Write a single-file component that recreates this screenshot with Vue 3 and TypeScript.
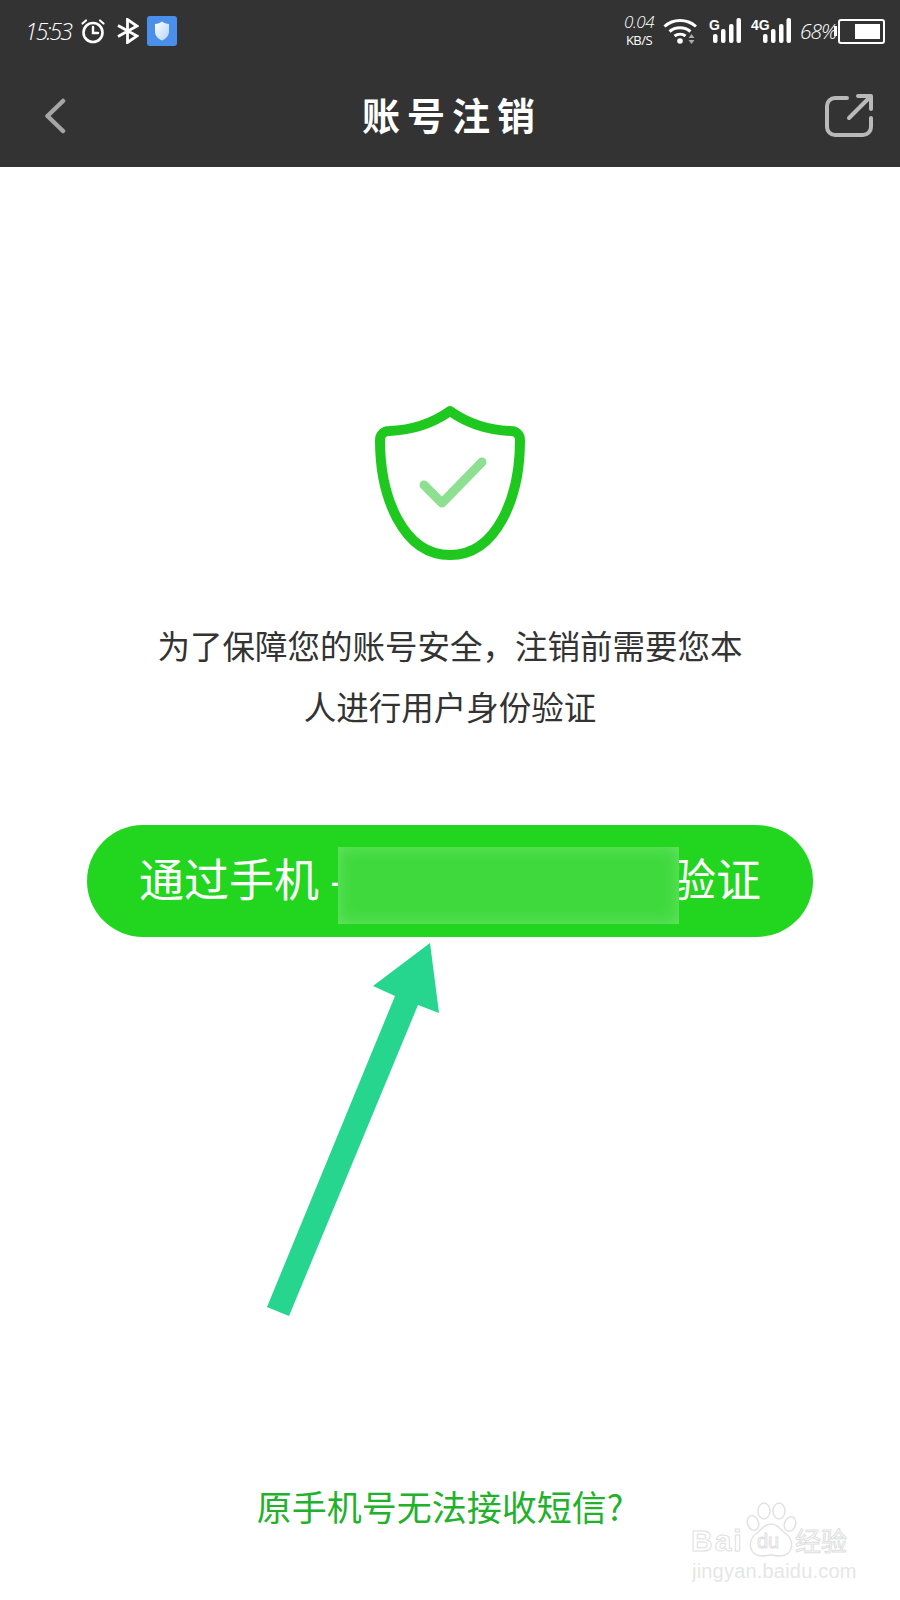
<template>
  <div class="page">
    <header class="topbar">
      <div class="status">
        <div class="status-left">
          <span class="time">15:53</span>
          <svg class="ic-clock" width="26" height="26" viewBox="0 0 26 26" fill="none" stroke="#fff" stroke-linecap="round">
            <circle cx="13" cy="14.5" r="9.5" stroke-width="2.6" />
            <path d="M13 9v6h5" stroke-width="2.4" />
            <path d="M2.5 5.5 6 2.5M23.5 5.5 20 2.5" stroke-width="2.2" />
          </svg>
          <svg class="ic-bt" width="22" height="26" viewBox="0 0 22 26" fill="none" stroke="#fff" stroke-width="2.8">
            <path d="M1 7.5 20 18 10.5 24.5V1.5L20 8 1 18.5" />
          </svg>
          <svg class="ic-app" width="30" height="30" viewBox="0 0 30 30">
            <defs>
              <linearGradient id="shieldFill" x1="0" y1="0" x2="1" y2="1">
                <stop offset="0" stop-color="#ffffff" />
                <stop offset="1" stop-color="#b5d2fa" />
              </linearGradient>
            </defs>
            <rect width="30" height="30" rx="3" fill="#4a90ea" />
            <path d="M15 5.5c2 1.6 4.4 2.3 7 2.5v7.5c0 4.200-3 7.300-7 9-4-1.700-7-4.800-7-9V8c2.600-.2 5-.9 7-2.500Z" fill="url(#shieldFill)" />
          </svg>
        </div>
        <div class="status-right">
          <div class="speed"><span>0.04</span><span class="speed-unit">KB/S</span></div>
          <svg class="ic-wifi" width="36" height="28" viewBox="0 0 36 28" fill="none" stroke="#fff" stroke-width="3">
            <path d="M1.500 9.500C10 1.500 24 1.500 33 9.500" />
            <path d="M6.500 14.500c6-5 15-5 21 0" />
            <path d="M11.500 19c3.500-2.500 8-2.500 11 0" />
            <circle cx="17" cy="24" r="2.800" fill="#fff" stroke="none" />
            <path d="m28.500 17 3 4h-6ZM25.500 23h6l-3 4Z" fill="#aaa" stroke="none" />
          </svg>
          <div class="signal sig-g">
            <span class="net">G</span>
            <svg width="28" height="26" viewBox="0 0 28 26" fill="#fff">
              <rect x="0" y="16" width="4.500" height="9" rx="2" />
              <rect x="8" y="11" width="4.500" height="14" rx="2" />
              <rect x="16" y="6" width="4.500" height="19" rx="2" />
              <rect x="23.500" y="0" width="4.500" height="25" rx="2" />
            </svg>
          </div>
          <div class="signal sig-4g">
            <span class="net">4G</span>
            <svg width="28" height="26" viewBox="0 0 28 26" fill="#fff">
              <rect x="0" y="16" width="4.500" height="9" rx="2" />
              <rect x="8" y="11" width="4.500" height="14" rx="2" />
              <rect x="16" y="6" width="4.500" height="19" rx="2" />
              <rect x="23.500" y="0" width="4.500" height="25" rx="2" />
            </svg>
          </div>
          <span class="percent">68%</span>
          <div class="battery"><div class="battery-fill" :style="{ width: batteryLevel + '%' }"></div></div>
        </div>
      </div>
      <nav class="navbar">
        <svg class="ic-back" width="22" height="36" viewBox="0 0 22 36" fill="none" stroke="#a6a6a6" stroke-width="4.500" stroke-linecap="round" stroke-linejoin="round">
          <path d="M19 3 3.500 18 19 33" />
        </svg>
        <h1 class="title">账号注销</h1>
        <svg class="ic-share" width="48" height="43" viewBox="0 0 48 43" fill="none" stroke="#b9b9b9" stroke-width="4" stroke-linecap="round" stroke-linejoin="round">
          <path d="M22 4H10a8 8 0 0 0-8 8v21a8 8 0 0 0 8 8h28a8 8 0 0 0 8-8V24" />
          <path d="M24 24 45 3M33 2h13v13" />
        </svg>
      </nav>
    </header>

    <main class="content">
      <svg class="shield" width="150" height="156" viewBox="0 0 150 156" fill="none" stroke-linecap="round" stroke-linejoin="round">
        <path d="M75 6C89 16 109 25 136 26 141 26 145 30 145 35 145 92 122 150 75 150 28 150 5 92 5 35 5 30 9 26 14 26 41 25 61 16 75 6Z" stroke="#1ec81e" stroke-width="10" />
        <path d="M49 80 67 98 107 57" stroke="#8ce090" stroke-width="9" />
      </svg>
      <p class="notice">为了保障您的账号安全，注销前需要您本<br />人进行用户身份验证</p>
      <button class="verify-btn">
        <span>通过手机</span><span class="dot">-</span><span class="btn-end">验证</span>
        <span class="blur-patch"></span>
      </button>
      <a class="help-link">原手机号无法接收短信?</a>
    </main>

    <svg class="arrow" width="900" height="1600" viewBox="0 0 900 1600">
      <path d="M430 943 439 1013 418 1005 289 1316 267 1307 395 996 373 986Z" fill="#26d68f" />
    </svg>

    <div class="watermark">
      <svg class="wm-paw" width="52" height="60" viewBox="0 0 52 60" fill="#fff" stroke="#e2e2e2" stroke-width="1.500">
        <ellipse cx="8" cy="23" rx="5.500" ry="7.500" transform="rotate(-20 8 23)" />
        <ellipse cx="19" cy="11" rx="6" ry="8" />
        <ellipse cx="34" cy="11" rx="6" ry="8" />
        <ellipse cx="45" cy="24" rx="5.500" ry="7.500" transform="rotate(20 45 24)" />
        <path d="M26 24c7 0 9 5 14 9 10 7 9 23-6 23-3 0-5-1-8-1s-5 1-8 1C3 56 2 40 12 33c5-4 7-9 14-9Z" />
      </svg>
      <span class="wm-bai">Bai</span>
      <span class="wm-du">du</span>
      <span class="wm-jy">经验</span>
      <span class="wm-url">jingyan.baidu.com</span>
    </div>
  </div>
</template>

<script setup lang="ts">
const batteryLevel = 68
</script>

<style>
html, body { margin: 0; background: #fff; }
</style>

<style scoped>
.page {
  position: relative;
  width: 900px;
  height: 1600px;
  overflow: hidden;
  display: flex;
  flex-direction: column;
  background: #fff;
  font-family: "Noto Sans CJK SC", "Noto Sans", sans-serif;
}

.topbar {
  background: #333333;
  height: 167px;
  flex-shrink: 0;
  display: flex;
  flex-direction: column;
}

.status {
  height: 62px;
  padding: 0 15px 0 25px;
  display: flex;
  align-items: center;
  justify-content: space-between;
  color: #fff;
}

.status-left, .status-right {
  display: flex;
  align-items: center;
}

.time {
  font-family: "Open Sans", sans-serif;
  font-style: italic;
  font-weight: 300;
  font-size: 23px;
  letter-spacing: -2px;
  width: 55px;
}

.ic-bt { margin-left: 11px; }
.ic-app { margin-left: 8px; }

.speed {
  display: flex;
  flex-direction: column;
  align-items: center;
  font-family: "Open Sans", sans-serif;
  font-style: italic;
  font-weight: 300;
  font-size: 17px;
  line-height: 18px;
  letter-spacing: -0.5px;
  margin-top: -1px;
}

.speed-unit {
  font-style: normal;
  font-weight: 400;
  font-size: 13px;
}

.ic-wifi { margin-left: 9px; }

.signal {
  position: relative;
  height: 26px;
  display: flex;
  align-items: flex-end;
  justify-content: flex-end;
}

.sig-g { width: 32px; margin-left: 10px; }
.sig-4g { width: 40px; margin-left: 10px; }

.net {
  position: absolute;
  left: 0;
  top: 0;
  font-family: "Liberation Sans", sans-serif;
  font-weight: 700;
  font-size: 14px;
  line-height: 14px;
}

.percent {
  font-family: "Open Sans", sans-serif;
  font-style: italic;
  font-weight: 300;
  font-size: 21px;
  letter-spacing: -1px;
  margin-left: 9px;
  width: 38px;
}

.battery {
  position: relative;
  box-sizing: border-box;
  width: 47px;
  height: 25px;
  border: 2.500px solid #fff;
  border-radius: 3px;
  padding: 3px;
  display: flex;
  justify-content: flex-end;
}

.battery::before {
  content: "";
  position: absolute;
  left: -6px;
  top: 5px;
  width: 3px;
  height: 10px;
  background: #fff;
}

.battery-fill {
  background: #fff;
  height: 100%;
}

.navbar {
  flex: 1;
  position: relative;
  display: flex;
  align-items: center;
  justify-content: space-between;
  padding: 2px 27px 0 44px;
}

.title {
  margin: 0;
  color: #fff;
  font-size: 38px;
  font-weight: 700;
  letter-spacing: 7px;
  line-height: 50px;
  position: absolute;
  left: 362px;
  top: 27px;
}

.content {
  flex: 1;
  display: flex;
  flex-direction: column;
  align-items: center;
  padding-top: 238px;
}

.shield { flex-shrink: 0; }

.notice {
  margin: 53px 0 0;
  width: 600px;
  color: #333;
  font-size: 32.500px;
  line-height: 61px;
  text-align: center;
}

.verify-btn {
  position: relative;
  margin-top: 89px;
  width: 726px;
  height: 112px;
  border: none;
  border-radius: 56px;
  background: #22d620;
  color: #fff;
  font-family: inherit;
  font-size: 45px;
  padding: 0 52px 8px;
  display: flex;
  align-items: center;
  flex-shrink: 0;
}

.dot { margin-left: 11px; }
.btn-end { margin-left: auto; }

.blur-patch {
  position: absolute;
  left: 251px;
  top: 22px;
  width: 341px;
  height: 77px;
  background: #3fd93d;
  box-shadow: inset 0 0 16px #68e566;
}

.help-link {
  margin-top: auto;
  margin-bottom: 68px;
  margin-right: 20px;
  color: #22b12a;
  font-size: 35px;
  line-height: 52px;
}

.arrow {
  position: absolute;
  left: 0;
  top: 0;
  pointer-events: none;
}

.watermark {
  position: absolute;
  left: 690px;
  top: 1500px;
  width: 170px;
  height: 90px;
}

.wm-paw {
  position: absolute;
  left: 55px;
  top: 0;
}

.wm-bai, .wm-du, .wm-jy {
  position: absolute;
  color: #fff;
  -webkit-text-stroke: 1px #e0e0e0;
  font-family: "Liberation Sans", sans-serif;
  font-weight: 700;
}

.wm-bai {
  left: 1px;
  top: 24px;
  font-size: 30px;
  line-height: 34px;
  letter-spacing: 2px;
}

.wm-du {
  left: 67px;
  top: 30px;
  font-size: 20px;
  line-height: 22px;
  font-weight: 400;
}

.wm-jy {
  left: 105px;
  top: 22px;
  font-family: "Noto Sans CJK SC", sans-serif;
  font-size: 26px;
  line-height: 36px;
  font-weight: 400;
}

.wm-url {
  position: absolute;
  left: 2px;
  top: 60px;
  color: #e6e6e6;
  font-family: "Liberation Sans", sans-serif;
  font-size: 20px;
  line-height: 22px;
  letter-spacing: 0.200px;
  white-space: nowrap;
}
</style>
